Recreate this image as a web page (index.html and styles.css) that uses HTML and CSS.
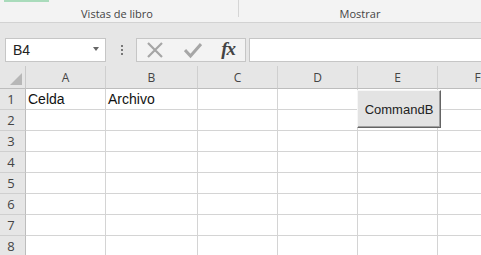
FILE: index.html
```html
<!DOCTYPE html>
<html lang="es">
<head>
    <meta charset="UTF-8">
    <meta name="viewport" content="width=device-width, initial-scale=1.0">
    <title>Libro1 - Excel</title>
    <link rel="stylesheet" href="styles.css">
</head>
<body>
    <div class="ribbon">
        <div class="grupo grupo-vistas">
            <span class="boton-verde"></span>
            <span class="etiqueta">Vistas de libro</span>
        </div>
        <div class="grupo grupo-mostrar">
            <span class="etiqueta">Mostrar</span>
        </div>
    </div>

    <div class="barra-formulas">
        <div class="cuadro-nombre">
            <span>B4</span>
            <span class="flecha"></span>
        </div>
        <div class="puntos">
            <span></span>
            <span></span>
            <span></span>
        </div>
        <div class="botones-formula">
            <svg width="18" height="18" viewBox="0 0 18 18">
                <path d="M2 2 L16 16 M16 2 L2 16" stroke="#a6a6a6" stroke-width="2.2" fill="none"/>
            </svg>
            <svg width="18" height="18" viewBox="0 0 18 18">
                <path d="M1 9 L6.5 15 L17 3" stroke="#a6a6a6" stroke-width="3" fill="none"/>
            </svg>
            <span class="fx">fx</span>
        </div>
        <div class="entrada-formula"></div>
    </div>

    <div class="contenedor-hoja">
        <div class="hoja">
            <div class="esquina"><span class="triangulo"></span></div>
            <div class="col-cab">A</div>
            <div class="col-cab">B</div>
            <div class="col-cab">C</div>
            <div class="col-cab">D</div>
            <div class="col-cab">E</div>
            <div class="col-cab">F</div>
        </div>
        <button class="boton-comando">CommandB</button>
    </div>

    <script>
        const hoja = document.querySelector('.hoja');
        const datos = { 1: ['Celda', 'Archivo'] };

        for (let fila = 1; fila <= 8; fila++) {
            const numero = document.createElement('div');
            numero.className = 'fila-cab';
            numero.textContent = fila;
            hoja.appendChild(numero);

            for (let col = 0; col < 6; col++) {
                const celda = document.createElement('div');
                celda.className = 'celda';
                const valores = datos[fila] || [];
                celda.textContent = valores[col] || '';
                hoja.appendChild(celda);
            }
        }
    </script>
</body>
</html>
```

FILE: styles.css
```css
body {
    margin: 0;
    width: 481px;
    height: 255px;
    overflow: hidden;
    background-color: #e6e6e6;
    font-family: "Open Sans", "Liberation Sans", sans-serif;
}
.ribbon {
    display: flex;
    height: 22px;
    background-color: #f3f3f3;
    border-bottom: 1px solid #d2d2d2;
}
.grupo {
    position: relative;
    display: flex;
    align-items: flex-end;
    justify-content: center;
}
.grupo-vistas {
    width: 238px;
    border-right: 1px solid #d5d5d5;
    height: 17px;
    align-self: flex-start;
}
.grupo-mostrar {
    flex: 1;
}
.etiqueta {
    font-size: 11px;
    color: #444;
    line-height: 14px;
    padding-bottom: 1px;
}
.grupo-vistas .etiqueta {
    position: relative;
    top: 5px;
    left: -2px;
}
.boton-verde {
    position: absolute;
    top: 0;
    left: 4px;
    width: 45px;
    height: 2px;
    background-color: #a9dbbb;
}
.barra-formulas {
    display: flex;
    align-items: center;
    height: 43px;
    padding: 10px 0 0 5px;
    box-sizing: border-box;
}
.cuadro-nombre {
    display: flex;
    align-items: center;
    justify-content: space-between;
    width: 101px;
    height: 24px;
    box-sizing: border-box;
    padding: 0 6px 0 7px;
    background: white;
    border: 1px solid #c6c6c6;
    font-family: "Liberation Sans", sans-serif;
    font-size: 14px;
    color: #222;
}
.flecha {
    width: 0;
    height: 0;
    border-left: 3.5px solid transparent;
    border-right: 3.5px solid transparent;
    border-top: 4px solid #666;
    margin-top: -2px;
}
.puntos {
    display: flex;
    flex-direction: column;
    gap: 2px;
    margin: 0 13px 0 15px;
}
.puntos span {
    display: block;
    width: 2px;
    height: 2px;
    background-color: #777;
}
.botones-formula {
    display: flex;
    align-items: center;
    justify-content: space-between;
    width: 110px;
    height: 24px;
    box-sizing: border-box;
    padding: 0 10px 0 9px;
    background: #f3f3f3;
    border: 1px solid #c6c6c6;
}
.fx {
    font-family: "Liberation Serif", serif;
    font-style: italic;
    font-weight: bold;
    font-size: 19px;
    color: #444;
    letter-spacing: -1px;
    margin-top: -2px;
}
.entrada-formula {
    flex: 1;
    height: 24px;
    margin-left: 3px;
    box-sizing: border-box;
    background: white;
    border: 1px solid #c6c6c6;
    border-right: none;
}
.contenedor-hoja {
    position: relative;
    overflow: hidden;
}
.hoja {
    display: grid;
    grid-template-columns: 26px 80px 92px 80px 80px 80px 80px;
    grid-auto-rows: 21px;
    grid-template-rows: 23px;
}
.esquina {
    background-color: #e6e6e6;
    border-right: 1px solid #c9c9c9;
    border-bottom: 1px solid #bdbdbd;
    position: relative;
}
.triangulo {
    position: absolute;
    right: 3px;
    bottom: 3px;
    width: 0;
    height: 0;
    border-left: 12px solid transparent;
    border-bottom: 12px solid #b7b7b7;
}
.col-cab {
    display: flex;
    align-items: center;
    justify-content: center;
    background-color: #e6e6e6;
    border-right: 1px solid #cfcfcf;
    border-bottom: 1px solid #bdbdbd;
    font-size: 12px;
    color: #444;
}
.fila-cab {
    display: flex;
    align-items: flex-end;
    justify-content: center;
    padding-bottom: 1px;
    padding-right: 3px;
    background-color: #e6e6e6;
    border-right: 1px solid #bdbdbd;
    border-bottom: 1px solid #cfcfcf;
    font-size: 13px;
    color: #444;
    line-height: 17px;
}
.celda {
    background: white;
    border-right: 1px solid #d4d4d4;
    border-bottom: 1px solid #d4d4d4;
    font-family: "Liberation Sans", sans-serif;
    font-size: 14px;
    color: #111;
    padding: 2px 0 0 2px;
    line-height: 17px;
    white-space: nowrap;
}
.boton-comando {
    position: absolute;
    left: 357px;
    top: 24px;
    width: 84px;
    height: 38px;
    background-color: #e3e3e3;
    border: 1px solid;
    border-color: #f6f6f6 #646464 #646464 #f6f6f6;
    box-shadow: inset -1px -1px 0 #a0a0a0;
    font-family: "Liberation Sans", sans-serif;
    font-size: 13px;
    color: #222;
    padding: 0;
}
```
